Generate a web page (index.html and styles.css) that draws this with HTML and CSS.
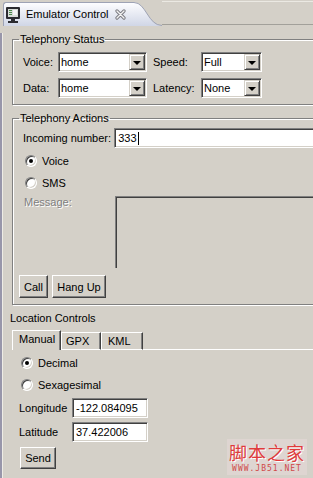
FILE: index.html
```html
<!DOCTYPE html>
<html lang="en">
<head>
    <meta charset="UTF-8">
    <meta name="viewport" content="width=device-width, initial-scale=1.0">
    <title>Emulator Control</title>
    <link rel="stylesheet" href="styles.css">
</head>
<body>
    <div class="header">
        <div class="view-tab">
            <svg class="view-icon" width="16" height="18" viewBox="0 0 16 18">
                <rect x="1" y="1" width="14" height="12" rx="1" fill="#2b2b30"/>
                <rect x="3" y="3" width="10" height="8" fill="#d8dcd8"/>
                <rect x="4" y="4" width="3" height="1" fill="#4a8a4a"/>
                <rect x="4" y="6" width="3" height="1" fill="#4a8a4a"/>
                <rect x="4" y="8" width="3" height="1" fill="#4a8a4a"/>
                <rect x="8" y="4" width="4" height="5" fill="#f4f4f4"/>
                <rect x="6" y="13" width="4" height="2" fill="#2b2b30"/>
                <rect x="3" y="15" width="10" height="2" fill="#2b2b30"/>
            </svg>
            <span class="view-title">Emulator Control</span>
            <svg class="close-icon" width="11" height="11" viewBox="0 0 11 11">
                <path d="M2 2 L9 9 M9 2 L2 9" stroke="#7a7a80" stroke-width="3.2" stroke-linecap="round"/>
                <path d="M2 2 L9 9 M9 2 L2 9" stroke="#f2f2f2" stroke-width="1.4" stroke-linecap="round"/>
            </svg>
        </div>
        <svg class="tab-curve" width="28" height="24" viewBox="0 0 28 24">
            <defs>
                <linearGradient id="tabGrad" x1="0" y1="0" x2="0" y2="1">
                    <stop offset="0" stop-color="#fdfdff"/>
                    <stop offset="1" stop-color="#d0d6e6"/>
                </linearGradient>
            </defs>
            <path d="M0 0.5 C12 0.5 14 23.5 28 23.5 L28 24 L0 24 Z" fill="url(#tabGrad)"/>
            <path d="M0 0.5 C12 0.5 14 23.5 28 23.5" fill="none" stroke="#9ea3b5"/>
        </svg>
        <div class="header-rest"></div>
    </div>

    <div class="content">
        <fieldset class="group">
            <legend>Telephony Status</legend>
            <div class="status-grid">
                <span>Voice:</span>
                <div class="combo wide"><span>home</span><span class="combo-btn"><i class="arrow"></i></span></div>
                <span>Speed:</span>
                <div class="combo narrow"><span>Full</span><span class="combo-btn"><i class="arrow"></i></span></div>
                <span>Data:</span>
                <div class="combo wide"><span>home</span><span class="combo-btn"><i class="arrow"></i></span></div>
                <span>Latency:</span>
                <div class="combo narrow"><span>None</span><span class="combo-btn"><i class="arrow"></i></span></div>
            </div>
        </fieldset>

        <fieldset class="group actions">
            <legend>Telephony Actions</legend>
            <div class="number-row">
                <span class="number-label">Incoming number:</span>
                <div class="field number-field">333<span class="caret"></span></div>
            </div>
            <div class="radio-row first">
                <span class="radio on"></span><span>Voice</span>
            </div>
            <div class="radio-row">
                <span class="radio"></span><span>SMS</span>
            </div>
            <div class="message-row">
                <span class="message-label">Message:</span>
                <div class="message-box"></div>
            </div>
            <div class="button-row">
                <button class="btn call">Call</button>
                <button class="btn hangup">Hang Up</button>
            </div>
        </fieldset>

        <div class="location-title">Location Controls</div>
        <div class="tabs">
            <div class="tab-item selected manual">Manual</div>
            <div class="tab-item gpx">GPX</div>
            <div class="tab-item kml">KML</div>
            <div class="tabs-fill"></div>
        </div>
        <div class="tab-body">
            <div class="radio-row loc-first">
                <span class="radio on"></span><span>Decimal</span>
            </div>
            <div class="radio-row">
                <span class="radio"></span><span>Sexagesimal</span>
            </div>
            <div class="coord-row">
                <span class="coord-label">Longitude</span>
                <div class="field coord-field">-122.084095</div>
            </div>
            <div class="coord-row second">
                <span class="coord-label">Latitude</span>
                <div class="field coord-field">37.422006</div>
            </div>
            <button class="btn send">Send</button>
        </div>
    </div>

    <div class="watermark">
        <div class="wm-cn">脚本之家</div>
        <div class="wm-url">WWW.JB51.NET</div>
    </div>
</body>
</html>
```

FILE: styles.css
```css
body {
    margin: 0;
    width: 313px;
    height: 478px;
    overflow: hidden;
    background-color: #d4d0c8;
    font-family: "Liberation Sans", Arial, sans-serif;
    font-size: 11px;
    line-height: 13px;
    color: #000;
    position: relative;
}

/* view tab header */
.header {
    display: flex;
    height: 26px;
}

.view-tab {
    display: flex;
    align-items: center;
    margin: 2px 0 0 3px;
    padding: 0 8px 0 1px;
    background: linear-gradient(#fdfdff, #d0d6e6);
    border-top: 1px solid #9ea3b5;
    border-left: 1px solid #9ea3b5;
    border-top-left-radius: 3px;
}

.view-icon {
    margin-top: 1px;
}

.view-title {
    margin-left: 5px;
    font-size: 11px;
}

.close-icon {
    margin-left: 6px;
}

.tab-curve {
    margin-top: 2px;
}

.header-rest {
    flex: 1;
    border-top: 1px solid #ebe9e3;
    border-bottom: 1px solid #a2a09a;
    margin-top: 1px;
    margin-bottom: 1px;
}

/* view body */
.content {
    border-left: 2px solid #9896aa;
    box-shadow: inset 1px 0 0 #eeece6;
    padding-left: 8px;
    height: 452px;
}

.group {
    margin: 7px -40px 0 2px;
    padding: 6px 0 6px 0;
    border: 1px solid #808080;
    box-shadow: 1px 1px 0 #fff, inset 1px 1px 0 #fff;
    min-width: 0;
}

.group legend {
    margin-left: 6px;
    padding: 0 1px;
    line-height: 13px;
}

.status-grid {
    display: grid;
    grid-template-columns: 35px 95px 48px 61px;
    row-gap: 6px;
    align-items: center;
    padding-left: 10px;
}

.combo {
    box-sizing: border-box;
    height: 20px;
    display: flex;
    align-items: center;
    padding: 1px 1px 1px 2px;
    background: #fff;
    border: 1px solid;
    border-color: #808080 #fff #fff #808080;
    box-shadow: inset 1px 1px 0 #404040, inset -1px -1px 0 #d4d0c8;
}

.combo.wide {
    width: 89px;
}

.combo.narrow {
    width: 61px;
}

.combo-btn {
    margin-left: auto;
    box-sizing: border-box;
    width: 16px;
    height: 16px;
    display: flex;
    align-items: center;
    justify-content: center;
    background: #d4d0c8;
    border: 1px solid;
    border-color: #d4d0c8 #404040 #404040 #d4d0c8;
    box-shadow: inset 1px 1px 0 #fff, inset -1px -1px 0 #808080;
}

.arrow {
    width: 0;
    height: 0;
    border-left: 4px solid transparent;
    border-right: 4px solid transparent;
    border-top: 4px solid #000;
    margin-top: 1px;
}

.field {
    box-sizing: border-box;
    height: 20px;
    display: flex;
    align-items: center;
    padding: 0 3px;
    background: #fff;
    border: 1px solid;
    border-color: #808080 #fff #fff #808080;
    box-shadow: inset 1px 1px 0 #404040, inset -1px -1px 0 #d4d0c8;
}

/* telephony actions */
.actions {
    padding-top: 3px;
    padding-bottom: 6px;
}

.number-row {
    display: flex;
    align-items: center;
    padding-left: 10px;
}

.number-label {
    width: 92px;
}

.number-field {
    width: 240px;
}

.caret {
    display: inline-block;
    width: 1px;
    height: 13px;
    margin-left: 1px;
    background: #000;
}

.radio-row {
    display: flex;
    align-items: center;
    gap: 5px;
    height: 22px;
    padding-left: 12px;
}

.radio-row.first {
    margin-top: 2px;
}

.radio {
    box-sizing: border-box;
    width: 12px;
    height: 12px;
    border-radius: 50%;
    border: 1px solid;
    border-color: #808080 #fff #fff #808080;
    background: #fff;
    box-shadow: inset 1px 1px 0 #404040, inset -1px -1px 0 #d4d0c8;
    display: flex;
    align-items: center;
    justify-content: center;
}

.radio.on::after {
    content: "";
    width: 4px;
    height: 4px;
    border-radius: 50%;
    background: #000;
}

.message-row {
    display: flex;
    align-items: flex-start;
    margin-top: 2px;
    padding-left: 11px;
}

.message-label {
    width: 92px;
    color: #808080;
    text-shadow: 1px 1px 0 #fff;
}

.message-box {
    box-sizing: border-box;
    width: 240px;
    height: 72px;
    border-top: 1px solid #808080;
    border-left: 1px solid #808080;
    box-shadow: inset 1px 1px 0 #404040;
}

.button-row {
    display: flex;
    gap: 4px;
    margin-top: 7px;
    padding-left: 6px;
}

.btn {
    box-sizing: border-box;
    height: 23px;
    padding: 0;
    font-family: inherit;
    font-size: 11px;
    color: #000;
    background: #d4d0c8;
    border: 1px solid;
    border-color: #fff #404040 #404040 #fff;
    box-shadow: inset -1px -1px 0 #808080;
}

.btn.call {
    width: 29px;
}

.btn.hangup {
    width: 54px;
}

/* location controls */
.location-title {
    margin-top: 7px;
}

.tabs {
    display: flex;
    align-items: flex-end;
    margin: 5px 0 0 2px;
    height: 20px;
}

.tab-item {
    box-sizing: border-box;
    height: 18px;
    padding-left: 4px;
    line-height: 16px;
    border-top: 1px solid #fff;
    border-left: 1px solid #fff;
    border-right: 1px solid #404040;
    border-bottom: 1px solid #fff;
    box-shadow: inset -1px 0 0 #808080;
}

.tab-item.selected {
    height: 20px;
    padding-left: 6px;
    line-height: 17px;
    border-bottom: none;
}

.tab-item.manual {
    width: 49px;
}

.tab-item.gpx {
    width: 40px;
}

.tab-item.kml {
    width: 42px;
    padding-left: 6px;
}

.tabs-fill {
    flex: 1;
    border-bottom: 1px solid #fff;
}

.tab-body {
    padding-left: 9px;
}

.tab-body .radio-row {
    padding-left: 2px;
}

.radio-row.loc-first {
    margin-top: 2px;
}

.coord-row {
    display: flex;
    align-items: center;
    margin-top: 2px;
}

.coord-row.second {
    margin-top: 4px;
}

.coord-label {
    width: 53px;
}

.coord-field {
    width: 76px;
    height: 20px;
}

.btn.send {
    width: 36px;
    height: 22px;
    margin-top: 5px;
    margin-left: 1px;
}

/* site watermark */
.watermark {
    position: absolute;
    right: 6px;
    top: 439px;
    padding: 1px 2px;
    background: rgba(235, 220, 220, 0.45);
    text-align: center;
    white-space: nowrap;
}

.wm-cn {
    font-family: "Noto Sans CJK SC", sans-serif;
    font-size: 18px;
    line-height: 24px;
    color: #e03a3a;
    text-shadow: 1px 1px 0 #fff;
    letter-spacing: 1px;
}

.wm-url {
    font-family: "DejaVu Sans Mono", monospace;
    font-size: 8px;
    line-height: 10px;
    color: #d04848;
    letter-spacing: 1px;
}
```
